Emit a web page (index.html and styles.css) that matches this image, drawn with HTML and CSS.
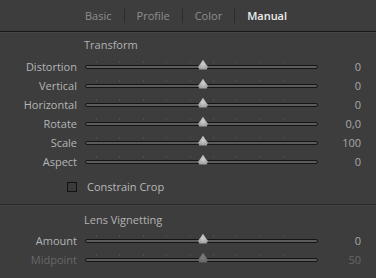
FILE: index.html
```html
<!DOCTYPE html>
<html lang="en">
<head>
  <meta charset="UTF-8" />
  <title>Lens Corrections - Manual</title>
  <link rel="stylesheet" href="styles.css">
</head>
<body>

  <nav class="tabs">
    <span class="tab">Basic</span>
    <span class="tab-sep"></span>
    <span class="tab">Profile</span>
    <span class="tab-sep"></span>
    <span class="tab">Color</span>
    <span class="tab-sep"></span>
    <span class="tab active">Manual</span>
  </nav>

  <section class="group">
    <div class="group-title">Transform</div>

    <div class="row">
      <span class="label">Distortion</span>
      <div class="track"><span class="thumb"></span></div>
      <span class="value">0</span>
    </div>
    <div class="row">
      <span class="label">Vertical</span>
      <div class="track"><span class="thumb"></span></div>
      <span class="value">0</span>
    </div>
    <div class="row">
      <span class="label">Horizontal</span>
      <div class="track"><span class="thumb"></span></div>
      <span class="value">0</span>
    </div>
    <div class="row">
      <span class="label">Rotate</span>
      <div class="track"><span class="thumb"></span></div>
      <span class="value">0,0</span>
    </div>
    <div class="row">
      <span class="label">Scale</span>
      <div class="track"><span class="thumb"></span></div>
      <span class="value">100</span>
    </div>
    <div class="row">
      <span class="label">Aspect</span>
      <div class="track"><span class="thumb"></span></div>
      <span class="value">0</span>
    </div>

    <label class="row check-row">
      <span class="checkbox"></span>
      <span class="check-label">Constrain Crop</span>
    </label>
  </section>

  <section class="group divided">
    <div class="group-title">Lens Vignetting</div>

    <div class="row">
      <span class="label">Amount</span>
      <div class="track"><span class="thumb"></span></div>
      <span class="value">0</span>
    </div>
    <div class="row disabled">
      <span class="label">Midpoint</span>
      <div class="track"><span class="thumb"></span></div>
      <span class="value">50</span>
    </div>
  </section>

</body>
</html>
```

FILE: styles.css
```css
/* Lightroom-style dark panel */
body {
  margin: 0;
  background: #3d3d3d;
  font-family: 'Open Sans', 'Noto Sans', sans-serif;
  font-size: 11px;
  color: #b5b5b5;
  width: 376px;
  height: 278px;
  overflow: hidden;
}

.tabs {
  height: 31px;
  display: flex;
  align-items: center;
  padding-left: 73px;
  border-bottom: 1px solid #181818;
  box-shadow: 0 1px 0 #454545;
}

.tab {
  color: #8e8e8e;
  padding: 0 12px;
}

.tab.active {
  color: #ededed;
  font-weight: 600;
}

.tab-sep {
  width: 1px;
  height: 15px;
  background: #2c2c2c;
}

.group {
  padding-top: 4px;
}

.group.divided {
  margin-top: 8px;
  padding-top: 6px;
  border-top: 1px solid #2a2a2a;
  box-shadow: inset 0 1px 0 #444;
}

.group-title {
  height: 18px;
  line-height: 18px;
  padding-left: 84px;
  margin-bottom: 3px;
  color: #b3b3b3;
}

.divided .group-title {
  margin-bottom: 2px;
}

.row {
  display: grid;
  grid-template-columns: 77px 233px 1fr;
  column-gap: 8px;
  align-items: center;
  height: 19px;
}

.label {
  text-align: right;
}

.value {
  text-align: right;
  padding-right: 15px;
  color: #a8a8a8;
}

.track {
  position: relative;
  height: 2px;
  border: 1px solid #151515;
  border-radius: 2px;
  background: #5c5c5c;
  box-sizing: content-box;
  width: 231px;
}

/* faint tick marks above the groove */
.track::before {
  content: "";
  position: absolute;
  left: 10px;
  right: 10px;
  top: -5px;
  height: 2px;
  background: repeating-linear-gradient(90deg, #4d4d4d 0 1px, transparent 1px 23.4px);
}

.thumb {
  position: absolute;
  left: 112px;
  top: -6px;
  width: 10px;
  height: 10px;
  background: radial-gradient(circle at 50% 40%, #d0d0d0, #8c8c8c);
  clip-path: polygon(50% 0, 78% 45%, 100% 70%, 88% 100%, 12% 100%, 0 70%, 22% 45%);
}

.check-row {
  margin-top: 6px;
}

.checkbox {
  justify-self: end;
  width: 8px;
  height: 8px;
  border: 1px solid #121212;
  background: #3a3a3a;
}

.check-label {
  grid-column: 2 / 4;
  padding-left: 2px;
  color: #b8b8b8;
}

.row.disabled .label,
.row.disabled .value {
  color: #676767;
}

.row.disabled .thumb {
  background: radial-gradient(circle at 50% 40%, #7c7c7c, #5e5e5e);
}
```
